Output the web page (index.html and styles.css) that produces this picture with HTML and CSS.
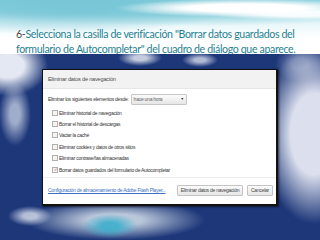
FILE: index.html
```html
<!DOCTYPE html>
<html lang="es">
<head>
<meta charset="utf-8">
<link rel="stylesheet" href="styles.css">
</head>
<body>
<div class="slide">
  <header class="header">
    <p class="title"><span class="num">6-</span>Selecciona la casilla de verificación "Borrar datos guardados del<br>formulario de Autocompletar" del cuadro de diálogo que aparece.</p>
  </header>
  <section class="stage">
    <div class="dialog">
      <div class="dlg-title">Eliminar datos de navegación</div>
      <div class="dlg-body">
        <div class="since">
          <span>Eliminar los siguientes elementos desde:</span>
          <span class="select"><span>hace una hora</span><span class="arrow">▼</span></span>
        </div>
        <ul class="checks">
          <li><span class="box"></span>Eliminar historial de navegación</li>
          <li><span class="box"></span>Borrar el historial de descargas</li>
          <li><span class="box"></span>Vaciar la caché</li>
          <li><span class="box"></span>Eliminar cookies y datos de otros sitios</li>
          <li><span class="box"></span>Eliminar contraseñas almacenadas</li>
          <li><span class="box checked">✓</span>Borrar datos guardados del formulario de Autocompletar</li>
        </ul>
      </div>
      <div class="dlg-foot">
        <a class="link">Configuración de almacenamiento de Adobe Flash Player...</a>
        <span class="btn btn-main">Eliminar datos de navegación</span>
        <span class="btn btn-cancel">Cancelar</span>
      </div>
    </div>
  </section>
</div>
</body>
</html>
```
FILE: styles.css
```css
html, body { margin: 0; padding: 0; }
body { width: 320px; height: 240px; overflow: hidden; background: #fff; }
.slide { width: 320px; height: 240px; display: flex; flex-direction: column; }

.header {
  height: 54px;
  box-sizing: border-box;
  padding: 27px 0 0 16px;
  background:
    radial-gradient(ellipse 130px 9px at 245px 8px, rgba(255,255,255,1) 45%, rgba(255,255,255,0) 100%),
    radial-gradient(ellipse 90px 6px at 300px 14px, rgba(255,255,255,0.9) 40%, rgba(255,255,255,0) 100%),
    radial-gradient(ellipse 280px 26px at 190px 0px, rgba(110,195,212,0.6) 60%, rgba(110,195,212,0) 100%),
    radial-gradient(ellipse 200px 34px at 50px 0px, rgba(120,198,215,0.8) 40%, rgba(120,198,215,0) 100%),
    linear-gradient(180deg, #c4e8ef 0%, #e4f5f8 40%, #ffffff 70%, #ffffff 100%);
}
.title {
  margin: 0;
  font-family: Lato, "Liberation Sans", sans-serif;
  font-size: 10.6px;
  line-height: 14.5px;
  letter-spacing: -0.35px;
  color: #1f8192;
  white-space: nowrap;
}
.num { color: #4a4a4a; }

.stage {
  flex: 1;
  padding: 15px 0 0 42px;
  background:
    radial-gradient(ellipse 28px 12px at 110px 172px, rgba(60,175,205,0.9) 30%, rgba(60,175,205,0) 100%),
    radial-gradient(ellipse 90px 20px at 115px 166px, rgba(225,235,242,0.8) 30%, rgba(225,235,242,0) 100%),
    radial-gradient(ellipse 22px 10px at 30px 162px, rgba(230,235,245,0.75) 30%, rgba(230,235,245,0) 100%),
    radial-gradient(ellipse 52px 90px at 314px 80px, rgba(220,224,238,1) 45%, rgba(220,224,238,0) 100%),
    radial-gradient(ellipse 25px 18px at 300px 10px, rgba(190,200,225,0.5) 30%, rgba(190,200,225,0) 100%),
    radial-gradient(ellipse 40px 30px at 8px 12px, rgba(228,232,242,1) 40%, rgba(228,232,242,0) 100%),
    radial-gradient(ellipse 16px 32px at 15px 60px, rgba(215,222,238,0.7) 30%, rgba(215,222,238,0) 100%),
    radial-gradient(ellipse 22px 8px at 140px 4px, rgba(225,230,240,0.85) 30%, rgba(225,230,240,0) 100%),
    radial-gradient(ellipse 18px 7px at 200px 6px, rgba(225,230,240,0.75) 30%, rgba(225,230,240,0) 100%),
    #1d3779;
}

.dialog {
  width: 236px;
  height: 137px;
  box-sizing: border-box;
  background: #fff;
  border: 1px solid #111;
  border-right-width: 2px;
  border-bottom-width: 2px;
  box-shadow: 1px 1px 2px rgba(0,0,0,0.6);
  font-family: "Liberation Sans", sans-serif;
  font-size: 5px;
  letter-spacing: -0.25px;
  color: #333;
  white-space: nowrap;
  display: flex;
  flex-direction: column;
}
.dlg-title {
  height: 19px;
  box-sizing: border-box;
  padding: 0 0 0 5px;
  display: flex;
  align-items: center;
  background: #f2f2f2;
  border-bottom: 1px solid #e6e6e6;
  color: #4a4a4a;
  font-size: 5.6px;
  letter-spacing: -0.2px;
}
.dlg-body { padding: 4px 0 0 5px; }
.since { display: flex; align-items: center; gap: 2px; height: 12px; }
.select {
  width: 56px;
  height: 11px;
  box-sizing: border-box;
  border: 1px solid #c6c6c6;
  border-radius: 1px;
  background: linear-gradient(#fbfbfb, #e6e6e6);
  padding: 0 2px;
  color: #666;
  display: flex;
  align-items: center;
  justify-content: space-between;
}
.arrow { font-size: 3.5px; color: #222; }
.checks { list-style: none; margin: 2px 0 0 0; padding: 0 0 0 4px; }
.checks li { height: 11.4px; display: flex; align-items: center; gap: 1px; }
.box {
  width: 4px; height: 4px;
  border: 1px solid #b0b0b0;
  background: #f4f4f4;
  font-size: 4px; line-height: 4px; text-align: center; color: #555;
  letter-spacing: 0;
}
.dlg-foot {
  margin-top: auto;
  height: 27px;
  box-sizing: border-box;
  border-top: 1px solid #ececec;
  display: flex;
  align-items: center;
  padding: 0 3px 2px 5px;
}
.link { color: #3b70c4; text-decoration: underline; }
.btn {
  height: 11px;
  box-sizing: border-box;
  border: 1px solid #c4c4c4;
  border-radius: 1px;
  background: linear-gradient(#fbfbfb, #e7e7e7);
  display: flex;
  align-items: center;
  justify-content: center;
  color: #444;
}
.btn-main { width: 66px; margin-left: auto; }
.btn-cancel { width: 26px; margin-left: 4px; }
```
